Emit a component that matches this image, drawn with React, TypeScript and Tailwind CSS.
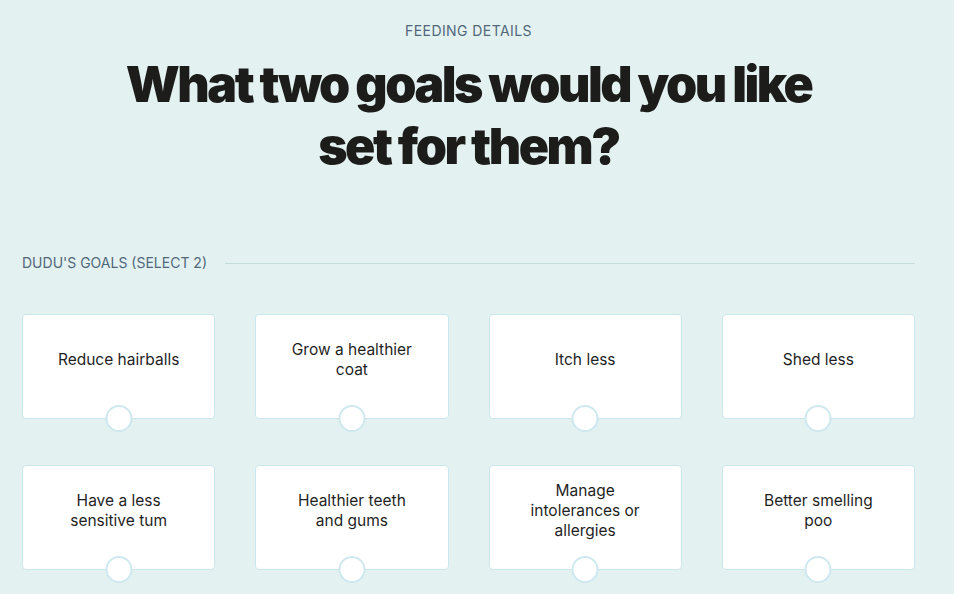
import React from 'react';

const GOALS: string[] = [
  'Reduce hairballs',
  'Grow a healthier coat',
  'Itch less',
  'Shed less',
  'Have a less sensitive tum',
  'Healthier teeth and gums',
  'Manage intolerances or allergies',
  'Better smelling poo',
];

const GoalCard: React.FC<{ label: string }> = ({ label }) => (
  <button className="relative h-[105px] bg-white border border-[#cbe7ee] rounded-[4px] flex items-center justify-center px-[30px] pb-[14px] text-center">
    <span className="text-[15.5px] leading-[20px] text-[#1f1f1f]">{label}</span>
    <span className="absolute left-1/2 -translate-x-1/2 bottom-[-14px] w-[27px] h-[27px] rounded-full bg-white border-2 border-[#cfe8ef]" />
  </button>
);

const App: React.FC = () => {
  return (
    <div className="min-h-screen bg-[#e3f1f1] font-['Inter','Liberation_Sans',sans-serif] overflow-hidden">
      <div className="w-[893px] ml-[22px] pt-[21px]">
        <p className="text-center text-[14px] leading-[20px] text-[#52687a] tracking-[0.03em]">FEEDING DETAILS</p>
        <h1 className="mt-[12px] mx-auto w-[740px] text-center text-[50px] leading-[62px] font-black tracking-[-0.05em] text-[#1c1c1a]">
          What two goals would you like set for them?
        </h1>

        <div className="mt-[76px] flex items-center gap-[18px]">
          <span className="text-[14px] leading-[20px] text-[#52687a] whitespace-nowrap">DUDU'S GOALS (SELECT 2)</span>
          <div className="flex-1 h-px bg-[#c6dcdc]" />
        </div>

        <div className="mt-[41px] grid grid-cols-4 gap-x-[40px] gap-y-[46px] pb-[40px]">
          {GOALS.map(g => (
            <GoalCard key={g} label={g} />
          ))}
        </div>
      </div>
    </div>
  );
};

export default App;
